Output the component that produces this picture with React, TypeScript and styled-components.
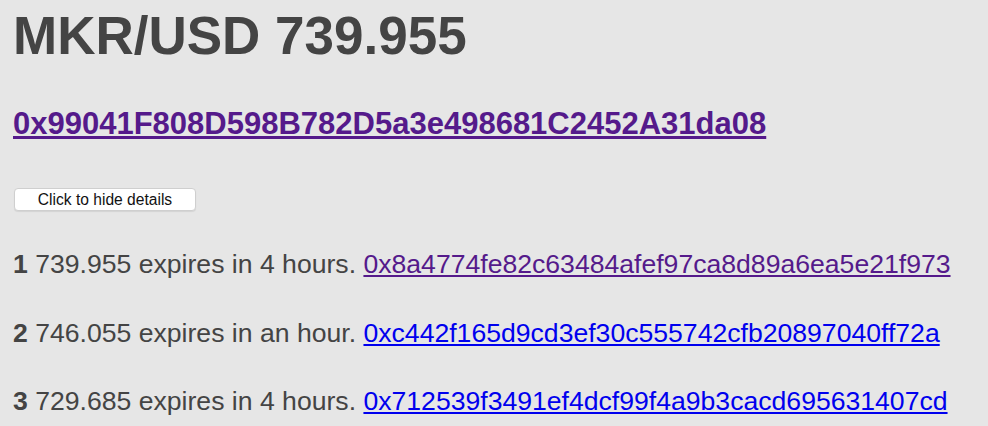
import React from "react";
import styled, { createGlobalStyle } from "styled-components";

const Global = createGlobalStyle`
  html, body {
    margin: 0;
    padding: 0;
    background: #e6e6e6;
  }
  body {
    font-family: "Liberation Sans", Arial, Helvetica, sans-serif;
    color: #444444;
  }
`;

const Page = styled.div`
  display: flex;
  flex-direction: column;
  align-items: flex-start;
  padding: 9px 10px 0 13px;
`;

const Title = styled.h1`
  margin: 0;
  font-size: 53px;
  line-height: 53px;
  font-weight: 700;
  color: #444444;
`;

const Address = styled.h3`
  margin: 46px 0 0 0;
  font-size: 31px;
  line-height: 31px;
  font-weight: 700;
`;

const Link = styled.a<{ $visited?: boolean }>`
  color: ${(p) => (p.$visited ? "#551a8b" : "#0000ee")};
  text-decoration: underline;
`;

const ToggleButton = styled.button`
  margin: 49px 0 0 1px;
  width: 182px;
  height: 23px;
  background: #ffffff;
  border: 1px solid #cfcfcf;
  border-radius: 4px;
  box-shadow: 0 1px 1px rgba(0, 0, 0, 0.08);
  font-family: "Liberation Sans", Arial, Helvetica, sans-serif;
  font-size: 15.6px;
  line-height: 21px;
  color: #111111;
  padding: 0;
`;

const Rows = styled.div`
  display: flex;
  flex-direction: column;
  gap: 42px;
  margin-top: 40px;
`;

const Row = styled.div`
  font-size: 26.6px;
  line-height: 26.6px;
  white-space: nowrap;
`;

const Index = styled.b`
  font-weight: 700;
`;

const entries = [
  { i: 1, price: "739.955", exp: "in 4 hours", addr: "0x8a4774fe82c63484afef97ca8d89a6ea5e21f973", visited: true },
  { i: 2, price: "746.055", exp: "in an hour", addr: "0xc442f165d9cd3ef30c555742cfb20897040ff72a", visited: false },
  { i: 3, price: "729.685", exp: "in 4 hours", addr: "0x712539f3491ef4dcf99f4a9b3cacd695631407cd", visited: false },
];

export default function App() {
  return (
    <>
      <Global />
      <Page>
        <Title>MKR/USD 739.955</Title>
        <Address>
          <Link $visited href="#">0x99041F808D598B782D5a3e498681C2452A31da08</Link>
        </Address>
        <ToggleButton>Click to hide details</ToggleButton>
        <Rows>
          {entries.map((e) => (
            <Row key={e.i}>
              <Index>{e.i}</Index> {e.price} expires {e.exp}.{" "}
              <Link $visited={e.visited} href="#">{e.addr}</Link>
            </Row>
          ))}
        </Rows>
      </Page>
    </>
  );
}
